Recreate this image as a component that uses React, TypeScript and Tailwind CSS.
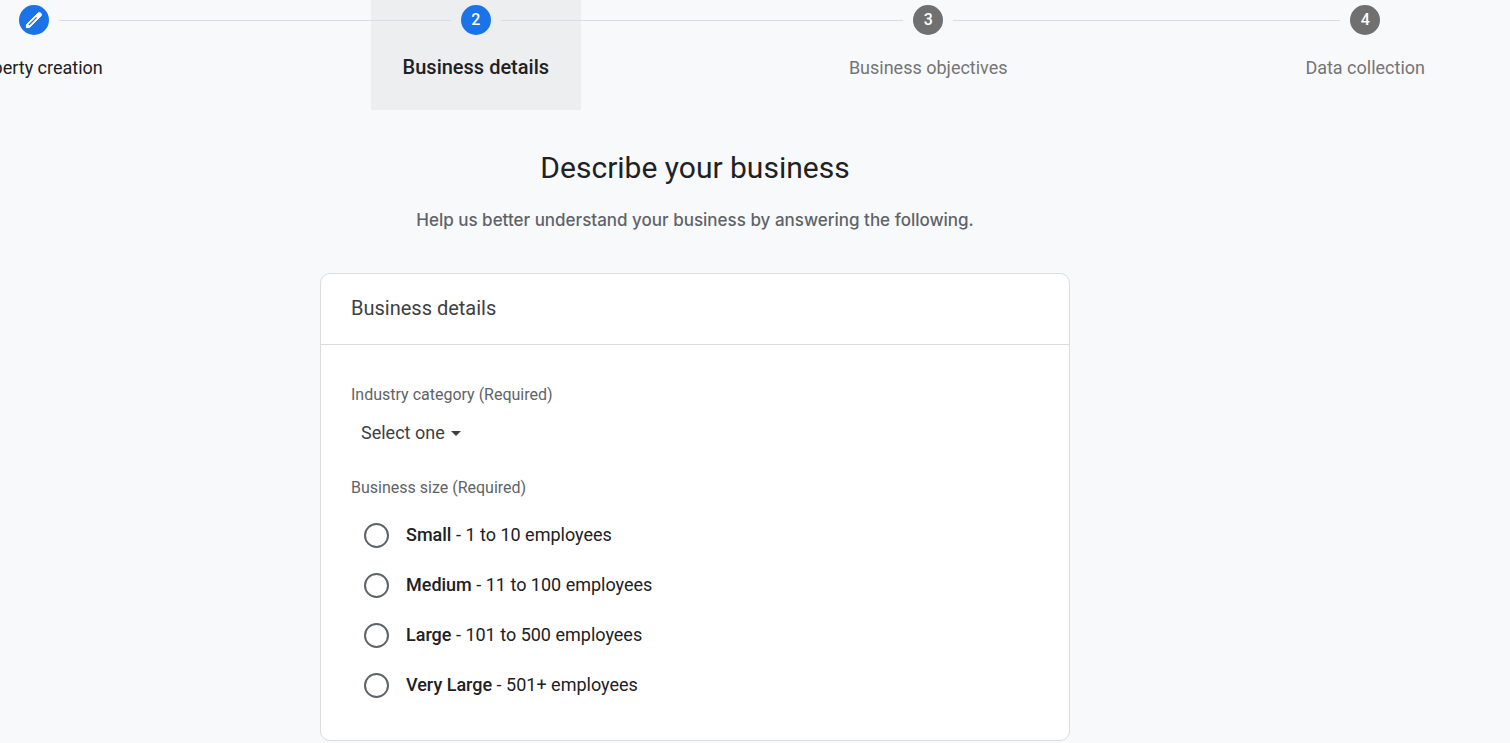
import { Fragment } from "react";

type StepState = "done" | "active" | "pending";

const steps: { label: string; state: StepState }[] = [
  { label: "Property creation", state: "done" },
  { label: "Business details", state: "active" },
  { label: "Business objectives", state: "pending" },
  { label: "Data collection", state: "pending" },
];

const sizes = [
  { name: "Small", detail: "1 to 10 employees" },
  { name: "Medium", detail: "11 to 100 employees" },
  { name: "Large", detail: "101 to 500 employees" },
  { name: "Very Large", detail: "501+ employees" },
];

const labelStyles: Record<StepState, string> = {
  done: "text-lg leading-[30px] text-[#202124]",
  active: "text-xl leading-7 font-medium text-[#202124]",
  pending: "text-lg leading-[30px] text-[#757575]",
};

function PencilIcon() {
  return (
    <svg viewBox="0 0 20 20" className="size-5" aria-hidden="true">
      <path
        d="M2.4 17.6v-3L13.8 3.2a2.1 2.1 0 0 1 3 3L5.4 17.6Z"
        fill="#fff"
        stroke="#fff"
        strokeWidth="1"
        strokeLinejoin="round"
      />
      <path d="M5 15 12.6 7.4" stroke="#1a73e8" strokeWidth="1.2" />
    </svg>
  );
}

function Stepper() {
  return (
    <nav aria-label="Setup steps" className="flex">
      {steps.map(({ label, state }, i) => (
        <Fragment key={label}>
          {i > 0 && <div className="mt-5 h-px flex-1 bg-[#dadce0]" />}
          <button
            type="button"
            aria-current={state === "active" ? "step" : undefined}
            className={`flex h-[110px] shrink-0 flex-col pt-[5px] ${state === "active" ? "bg-[#edeef0]" : ""}`}
          >
            <span className="flex w-full items-center gap-2.5">
              <span className={`h-px flex-1 ${i > 0 ? "bg-[#dadce0]" : ""}`} />
              <span
                className={`flex size-[30px] items-center justify-center rounded-full text-base font-medium text-white ${
                  state === "pending" ? "bg-[#707070]" : "bg-[#1a73e8]"
                }`}
              >
                {state === "done" ? <PencilIcon /> : i + 1}
              </span>
              <span className={`h-px flex-1 ${i < steps.length - 1 ? "bg-[#dadce0]" : ""}`} />
            </span>
            <span className={`mt-[18px] whitespace-nowrap ${state === "active" ? "px-8" : "px-[30px]"} ${labelStyles[state]}`}>
              {label}
            </span>
          </button>
        </Fragment>
      ))}
    </nav>
  );
}

export default function App() {
  return (
    <div className="min-h-screen overflow-hidden bg-[#f8f9fb] font-[Roboto,sans-serif]">
      <div className="mr-[55px] -ml-[65px]">
        <Stepper />
        <main className="mx-auto max-w-[750px]">
          <h1 className="mt-[38px] text-center text-[30px] leading-10 text-[#202124]">
            Describe your business
          </h1>
          <p className="mt-5 text-center font-[Inter,sans-serif] text-[17px] leading-6 font-medium text-[#5f6368]">
            Help us better understand your business by answering the following.
          </p>
          <form className="mt-[41px] rounded-[10px] border border-[#dadce0] bg-white">
            <h2 className="border-b border-[#dadce0] px-[30px] pt-[19px] pb-[21px] text-xl leading-[30px] text-[#3c4043]">
              Business details
            </h2>
            <div className="px-[30px] pt-10 pb-[30px]">
              <label htmlFor="industry" className="block text-base leading-5 text-[#5f6368]">
                Industry category (Required)
              </label>
              <div className="mt-3 flex items-center pl-2.5">
                <select
                  id="industry"
                  className="-mr-4 h-8 cursor-pointer appearance-none bg-transparent pr-[22px] text-lg leading-8 text-[#3c4043] [field-sizing:content]"
                >
                  <option>Select one</option>
                </select>
                <svg viewBox="0 0 10 5" className="pointer-events-none h-[5px] w-2.5" aria-hidden="true">
                  <path d="M0 0h10L5 5Z" fill="#3c4043" />
                </svg>
              </div>
              <fieldset className="mt-[29px]">
                <legend className="text-base leading-5 text-[#5f6368]">Business size (Required)</legend>
                <div className="pt-3 pl-[13px]">
                  {sizes.map(({ name, detail }) => (
                    <label key={name} className="flex h-[50px] cursor-pointer items-center gap-[17px] text-lg text-[#202124]">
                      <input
                        type="radio"
                        name="size"
                        value={name}
                        className="size-[25px] shrink-0 appearance-none rounded-full border-2 border-[#5f6368] checked:border-8 checked:border-[#1a73e8]"
                      />
                      <span>
                        <span className="font-medium">{name}</span> - {detail}
                      </span>
                    </label>
                  ))}
                </div>
              </fieldset>
            </div>
          </form>
        </main>
      </div>
    </div>
  );
}
